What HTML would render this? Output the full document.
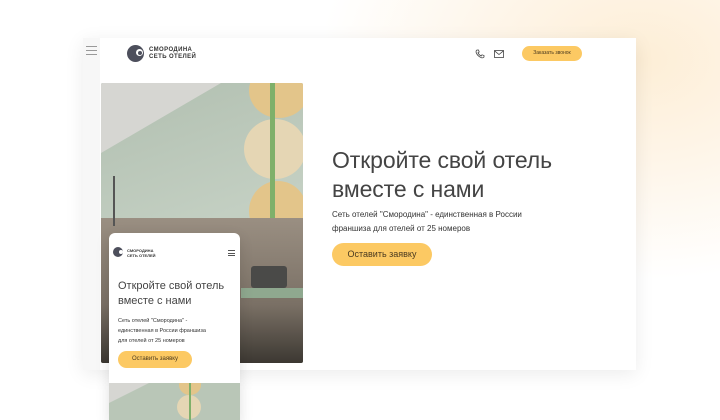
<!DOCTYPE html>
<html><head><meta charset="utf-8"><style>
*{margin:0;padding:0;box-sizing:border-box}
html,body{width:720px;height:420px;overflow:hidden}
body{position:relative;font-family:"Liberation Sans",sans-serif;color:#2a2a2a;
background:radial-gradient(ellipse 320px 220px at 640px 60px,#fdeed6 0%,#fef5e8 45%,#fff 100%);}
.card{position:absolute;left:83px;top:38px;width:553px;height:332px;background:#fff;box-shadow:0 4px 18px rgba(0,0,0,.08)}
.side{position:absolute;left:83px;top:38px;width:17px;height:332px;background:#f7f7f7}
.ham{position:absolute;left:86px;top:46px;width:11px}
.ham i{display:block;height:1px;background:#999;margin-bottom:3px}
.photo{position:absolute;overflow:hidden;background:#b9c7b8}
.wall{position:absolute;inset:0;background:linear-gradient(160deg,#b1bfb0 0%,#c3cfc2 50%,#bccab9 100%)}
.blob{position:absolute;border-radius:50%}
h1{position:absolute;left:332px;top:146px;font-size:23px;font-weight:normal;line-height:29px;color:#444;letter-spacing:-.1px}
.p{position:absolute;left:332px;top:208px;font-size:8px;line-height:14px;color:#333}
.btn{position:absolute;background:#fcc963;border-radius:12px;text-align:center;color:#4a3a20}
</style></head><body>
<div class="card"></div>
<div class="side"></div>
<div class="ham"><i></i><i></i><i></i></div>
<!-- logo -->
<div style="position:absolute;left:127px;top:45px;width:17px;height:17px;border-radius:50%;background:#4d4f5c"></div>
<div style="position:absolute;left:136px;top:49px;width:7px;height:7px;border-radius:50%;background:#fff"></div>
<div style="position:absolute;left:138px;top:51px;width:4px;height:4px;border-radius:50%;background:#4d4f5c"></div>
<div style="position:absolute;left:149px;top:47px;font-size:6px;font-weight:bold;line-height:7px;letter-spacing:.4px;color:#333">СМОРОДИНА<br>СЕТЬ ОТЕЛЕЙ</div>
<!-- icons -->
<svg style="position:absolute;left:475px;top:49px" width="10" height="10" viewBox="0 0 10 10"><path d="M2 1 L3.5 1 L4.2 3 L3 3.8 Q4 6 6.2 7 L7 5.8 L9 6.5 L9 8 Q8 9.2 6.5 8.8 Q2 7 1 3 Q1 1.5 2 1Z" fill="none" stroke="#444" stroke-width=".8"/></svg>
<svg style="position:absolute;left:494px;top:50px" width="10" height="8" viewBox="0 0 10 8"><rect x=".5" y=".5" width="9" height="7" fill="none" stroke="#444" stroke-width=".8"/><path d="M.5 .8 L5 4.5 L9.5 .8" fill="none" stroke="#444" stroke-width=".8"/></svg>
<div class="btn" style="left:522px;top:46px;width:60px;height:15px;line-height:15px;font-size:5px">Заказать звонок</div>
<!-- photo -->
<div class="photo" style="left:101px;top:83px;width:202px;height:280px;border-radius:2px">
 <div class="wall"></div>
 <div style="position:absolute;left:0;top:0;width:0;height:0;border-top:70px solid #d6d6d2;border-right:120px solid transparent"></div>
 <div class="blob" style="left:148px;top:-20px;width:60px;height:55px;background:#e3c58a"></div>
 <div class="blob" style="left:143px;top:36px;width:62px;height:60px;background:#e5d6b4"></div>
 <div class="blob" style="left:148px;top:98px;width:58px;height:60px;background:#e3c58a"></div>
 <div style="position:absolute;left:169px;top:0;width:5px;height:140px;background:#7fb06a"></div>
 <div style="position:absolute;left:0;top:135px;width:202px;height:145px;background:linear-gradient(180deg,#9a8f82,#7a7065 60%,#3c3832)"></div>
 <div style="position:absolute;left:140px;top:205px;width:62px;height:10px;background:#8fa88f"></div>
 <div style="position:absolute;left:150px;top:183px;width:36px;height:22px;background:#4a4a48;border-radius:3px"></div>
 <div style="position:absolute;left:12px;top:93px;width:2px;height:50px;background:#555"></div>
</div>
<!-- main text -->
<h1>Откройте свой отель<br>вместе с нами</h1>
<div class="p">Сеть отелей "Смородина" - единственная в России<br>франшиза для отелей от 25 номеров</div>
<div class="btn" style="left:332px;top:243px;width:100px;height:23px;line-height:23px;font-size:9px">Оставить заявку</div>
<!-- mobile -->
<div style="position:absolute;left:109px;top:233px;width:131px;height:190px;background:#fff;border-radius:6px 6px 0 0;box-shadow:0 4px 14px rgba(0,0,0,.12);overflow:hidden">
 <div style="position:absolute;left:4px;top:14px;width:10px;height:10px;border-radius:50%;background:#4d4f5c"></div>
 <div style="position:absolute;left:10px;top:17px;width:4px;height:4px;border-radius:50%;background:#fff"></div>
 <div style="position:absolute;left:18px;top:15px;font-size:4px;font-weight:bold;line-height:5px;color:#333">СМОРОДИНА<br>СЕТЬ ОТЕЛЕЙ</div>
 <div style="position:absolute;left:119px;top:17px;width:7px"><div style="height:1px;background:#555;margin-bottom:1.5px"></div><div style="height:1px;background:#555;margin-bottom:1.5px"></div><div style="height:1px;background:#555"></div></div>
 <div style="position:absolute;left:9px;top:46px;font-size:11px;line-height:15px;color:#444">Откройте свой отель<br>вместе с нами</div>
 <div style="position:absolute;left:9px;top:83px;font-size:5.5px;line-height:10px;color:#333">Сеть отелей "Смородина" -<br>единственная в России франшиза<br>для отелей от 25 номеров</div>
 <div class="btn" style="left:9px;top:118px;width:74px;height:17px;line-height:17px;font-size:6px">Оставить заявку</div>
 <div style="position:absolute;left:0;top:150px;width:131px;height:40px;background:#b9c6b7;overflow:hidden">
  <div style="position:absolute;left:0;top:0;border-top:20px solid #d6d6d2;border-right:40px solid transparent"></div>
  <div class="blob" style="left:70px;top:-8px;width:22px;height:20px;background:#e3c58a"></div>
  <div class="blob" style="left:68px;top:12px;width:24px;height:24px;background:#e5d6b4"></div>
  <div style="position:absolute;left:80px;top:0;width:2px;height:40px;background:#7fb06a"></div>
 </div>
</div>
</body></html>
